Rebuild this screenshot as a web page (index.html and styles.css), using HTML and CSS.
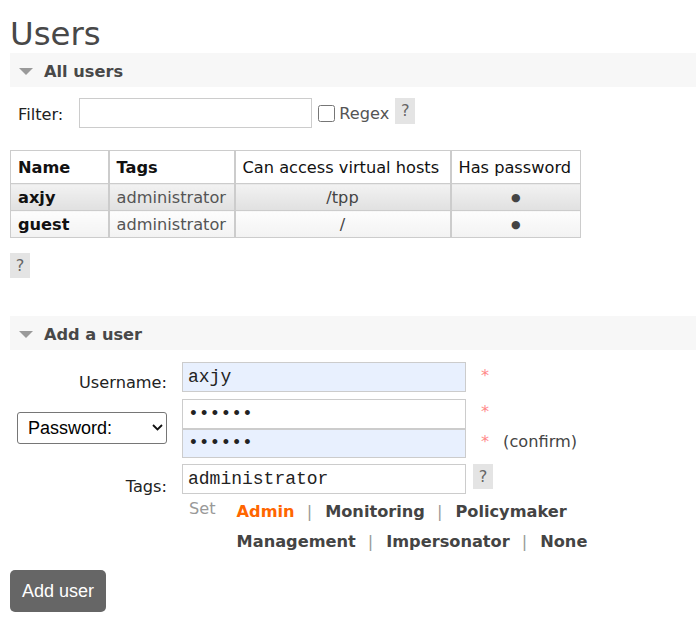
FILE: index.html
```html
<!DOCTYPE html>
<html>
<head>
<meta charset="utf-8">
<title>Users</title>
<link rel="stylesheet" href="styles.css">
</head>
<body>
<h1 class="title">Users</h1>

<section class="section">
  <h2 class="section-head"><span class="tri"></span>All users</h2>
  <div class="filter-row">
    <label class="filter-label">Filter:</label>
    <input class="text-input filter-input" type="text">
    <input class="check" type="checkbox">
    <span class="regex">Regex</span>
    <span class="help">?</span>
  </div>
  <table class="list">
    <colgroup>
      <col class="c1"><col class="c2"><col class="c3"><col class="c4">
    </colgroup>
    <tr class="head">
      <th class="b">Name</th>
      <th class="b">Tags</th>
      <th>Can access virtual hosts</th>
      <th>Has password</th>
    </tr>
    <tr class="alt1">
      <td class="name">axjy</td>
      <td>administrator</td>
      <td class="c">/tpp</td>
      <td class="c dot">&#9679;</td>
    </tr>
    <tr class="alt2">
      <td class="name">guest</td>
      <td>administrator</td>
      <td class="c">/</td>
      <td class="c dot">&#9679;</td>
    </tr>
  </table>
  <div class="help-wrap"><span class="help help-sm">?</span></div>
</section>

<section class="section add">
  <h2 class="section-head"><span class="tri"></span>Add a user</h2>
  <div class="form">
    <div class="row row-user">
      <label class="lbl">Username:</label>
      <input class="text-input field autofill" type="text" value="axjy">
      <span class="star">*</span>
    </div>
    <div class="row row-pass">
      <div class="lbl-sel">
        <div class="sel-wrap">
          <select class="sel">
            <option>Password:</option>
            <option>Password hash:</option>
            <option>No password</option>
          </select>
          <svg class="chev" width="11" height="7" viewBox="0 0 11 7"><polyline points="1,1 5.5,5.5 10,1" fill="none" stroke="#111" stroke-width="1.8"/></svg>
        </div>
      </div>
      <div class="pass-fields">
        <input class="text-input field pw1" type="password" value="123456">
        <input class="text-input field pw2 autofill" type="password" value="123456">
      </div>
      <div class="stars">
        <div class="star-line"><span class="star-c">*</span></div>
        <div class="star-line"><span class="star-c">*</span><span class="confirm">(confirm)</span></div>
      </div>
    </div>
    <div class="row row-tags">
      <label class="lbl lbl-tags">Tags:</label>
      <input class="text-input field" type="text" value="administrator">
      <span class="help help-sm tag-help">?</span>
    </div>
    <div class="tag-sel">
      <span class="set">Set</span>
      <div class="links">
        <div class="link-line"><span class="tag admin">Admin</span><span class="sep">|</span><span class="tag">Monitoring</span><span class="sep">|</span><span class="tag">Policymaker</span></div>
        <div class="link-line"><span class="tag">Management</span><span class="sep">|</span><span class="tag">Impersonator</span><span class="sep">|</span><span class="tag">None</span></div>
      </div>
    </div>
    <button class="btn" type="button">Add user</button>
  </div>
</section>
</body>
</html>
```

FILE: styles.css
```css
* { box-sizing: border-box; }

html, body {
  margin: 0;
  padding: 0;
  background: #fff;
}

body {
  padding-left: 10px;
  font-family: "DejaVu Sans", Verdana, sans-serif;
  font-size: 16.2px;
  color: #222;
}

.title {
  margin: 0;
  padding-top: 15px;
  font-size: 32.4px;
  line-height: 38px;
  font-weight: normal;
  color: #484848;
}

.section-head {
  margin: 0;
  height: 34px;
  display: flex;
  align-items: flex-start;
  padding: 3px 0 0 9px;
  background: #f7f7f7;
  font-size: 16.2px;
  font-weight: bold;
  color: #484848;
  line-height: 31px;
}

.tri {
  width: 0;
  height: 0;
  border-left: 7.5px solid transparent;
  border-right: 7.5px solid transparent;
  border-top: 7px solid #9a9a9a;
  margin: 12px 11px 0 0;
}

.filter-row {
  display: flex;
  align-items: center;
  margin-top: 11px;
  padding-left: 8px;
  height: 30px;
}

.filter-label {
  margin-right: 16px;
  padding-top: 2px;
}

.text-input {
  height: 30px;
  border: 1px solid #ccc;
  padding: 0 5px;
  font-family: "Liberation Mono", "DejaVu Sans Mono", monospace;
  font-size: 18px;
  color: #222;
  background: #fff;
  outline: none;
  border-radius: 0;
  margin: 0;
}

.filter-input { width: 233px; }

.check {
  width: 17px;
  height: 17px;
  margin: 0 4px 0 6px;
}

.regex {
  color: #555;
  margin-right: 6px;
}

.help {
  display: inline-block;
  width: 20px;
  height: 26px;
  line-height: 26px;
  text-align: center;
  background: #e4e4e4;
  color: #666;
  align-self: flex-start;
}

.help-sm {
  height: 25px;
  line-height: 25px;
}

.list {
  margin-top: 22px;
  border-collapse: collapse;
  table-layout: fixed;
  width: 570px;
}

.list .c1 { width: 98px; }
.list .c2 { width: 126px; }
.list .c3 { width: 216px; }
.list .c4 { width: 130px; }

.list th, .list td {
  border: 1px solid #ccc;
  padding: 0 7px 0 7px;
  white-space: nowrap;
  overflow: hidden;
}

.list th + th, .list td + td { border-left-width: 2px; }

.list th {
  height: 33px;
  font-weight: normal;
  text-align: left;
  color: #111;
  background: #fff;
}

.list th.b { font-weight: bold; }

.list td {
  height: 27px;
  color: #555;
}

.list td.name {
  font-weight: bold;
  color: #111;
}

.list td.c {
  text-align: center;
  color: #444;
}

.list td.dot {
  font-size: 11px;
  color: #444;
}

.alt1 td { background: linear-gradient(#f2f2f2, #e0e0e0); }
.alt2 td { background: linear-gradient(#fdfdfd, #f2f2f2); }

.help-wrap {
  margin-top: 15px;
  height: 25px;
  display: flex;
}

.add { margin-top: 38px; }

.row {
  display: flex;
  align-items: flex-start;
}

.row-user { margin-top: 12px; height: 30px; }
.row-pass { margin-top: 6px; align-items: center; }
.row-tags { margin-top: 6px; height: 30px; }

.lbl {
  width: 157px;
  margin-right: 15px;
  text-align: right;
  padding-top: 11px;
  line-height: 20px;
  flex: none;
}

.lbl-tags { padding-top: 13px; }

.lbl-sel {
  width: 157px;
  margin-right: 15px;
  display: flex;
  justify-content: flex-end;
  flex: none;
}

.sel-wrap {
  position: relative;
  width: 150px;
  height: 32px;
}

.sel {
  width: 150px;
  height: 32px;
  -webkit-appearance: none;
  appearance: none;
  font-family: "Liberation Sans", Arial, sans-serif;
  font-size: 18px;
  padding-left: 10px;
  border: 1px solid #767676;
  border-radius: 3px;
  background: #fff;
  color: #000;
}

.chev {
  position: absolute;
  right: 4px;
  top: 12px;
  pointer-events: none;
}

.field {
  width: 284px;
  flex: none;
}

.autofill { background: #e8f0fe; }

.pass-fields {
  display: flex;
  flex-direction: column;
}

.pw2 { height: 29px; }

.star {
  color: #f88;
  margin-left: 15px;
  padding-top: 4px;
  line-height: 20px;
}

.stars {
  display: flex;
  flex-direction: column;
  align-self: flex-start;
}

.star-line {
  height: 30px;
  padding-top: 4px;
  line-height: 20px;
  padding-left: 15px;
}

.star-c { color: #f88; }

.confirm {
  color: #444;
  margin-left: 14px;
}

.tag-help { margin-left: 7px; }

.tag-sel {
  display: flex;
  align-items: flex-start;
  margin-top: 3px;
  padding-left: 179px;
}

.set {
  color: #999;
  line-height: 24px;
}

.links {
  margin-left: 21px;
  font-weight: bold;
  color: #444;
}

.link-line {
  line-height: 30px;
  white-space: nowrap;
}

.tag.admin { color: #f60; }

.sep {
  font-weight: normal;
  color: #999;
  margin: 0 13px 0 12px;
}

.btn {
  display: block;
  margin-top: 13px;
  height: 42px;
  padding: 0 12px;
  background: #666;
  color: #fff;
  border: none;
  border-radius: 5px;
  font-family: "Liberation Sans", Arial, sans-serif;
  font-size: 18px;
}
```
